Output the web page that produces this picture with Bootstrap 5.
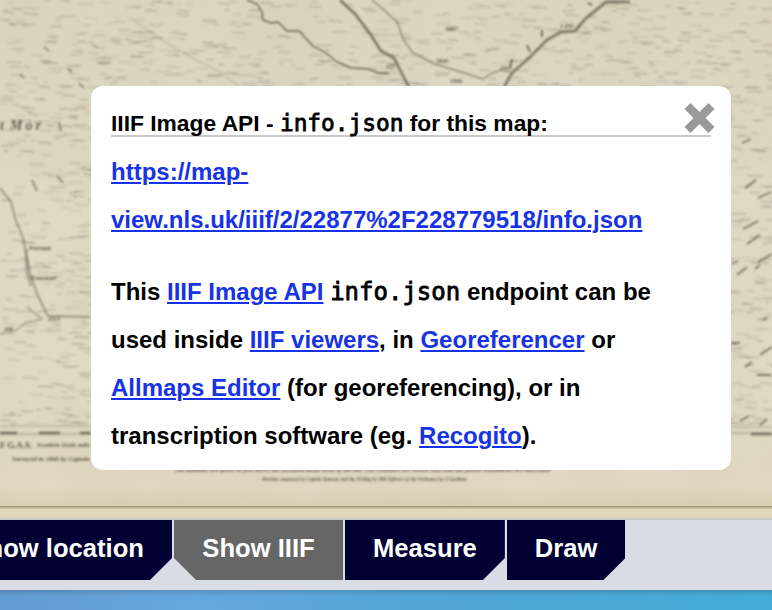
<!DOCTYPE html>
<html lang="en">
<head>
<meta charset="utf-8">
<meta name="viewport" content="width=device-width, initial-scale=1">
<title>Map viewer - IIIF</title>
<link href="https://cdn.jsdelivr.net/npm/bootstrap@5.3.0/dist/css/bootstrap.min.css" rel="stylesheet">
<style>
body{font-family:"Liberation Sans",Arial,sans-serif;font-weight:700;color:#000;background:#4a9fd2}
.viewer{height:610px}
.map-area{height:518px;background:#dbd4bf}
.map-art{display:block;width:772px;height:518px}
.iiif-panel{top:86px;left:91px;width:640px;height:384px;border-radius:12px;padding:12px 20px 0;font-size:24px;line-height:48px}
.panel-title{font-size:22.8px;line-height:51px;height:39px;border-bottom:2px solid #c8c8c8;white-space:nowrap}
.iiif-panel a{color:#1733e6;text-decoration:underline;text-decoration-thickness:2px;text-underline-offset:2px}
.json-name{font-family:"DejaVu Sans Mono",monospace;font-weight:400;-webkit-text-stroke:.8px #000}
.address{margin:11px 0 24px}
.panel-close{top:17px;right:16px;width:31px;height:30px;background:none;line-height:0}
.tool-bar{height:72px;background:#dadce6;border-top:2px solid #cacac8;gap:2px}
.tool{height:60px;padding:0 28px 4px;font-size:25.6px;line-height:56px;background:#000033;color:#fff;border:0;font-weight:700;white-space:nowrap;flex:none;clip-path:polygon(0 0,100% 0,100% 38px,calc(100% - 22px) 100%,0 100%)}
.tool.first{width:240px;margin-left:-68px}
.tool.current{width:169px;background:#666;clip-path:polygon(0 0,100% 0,100% 100%,22px 100%,0 38px)}
.water{height:20px;background:linear-gradient(#0002,transparent 6px),linear-gradient(90deg,#629bd2,#65a7dc 25%,#50a5d5 60%,#44abd9)}
</style>
<script src="https://cdn.jsdelivr.net/npm/bootstrap@5.3.0/dist/js/bootstrap.bundle.min.js"></script>
</head>
<body class="overflow-hidden">
<div class="viewer d-flex flex-column overflow-hidden">
<main class="map-area position-relative flex-shrink-0">
<svg class="map-art" viewBox="0 0 772 518" aria-hidden="true">
<defs>
<linearGradient id="paper" x2="0" y2="1"><stop offset="0" stop-color="#dcd5bf"/><stop offset=".45" stop-color="#dfd9c5"/><stop offset=".8" stop-color="#dfd8c4"/><stop offset=".94" stop-color="#e0d8c1"/><stop offset="1" stop-color="#d8caaa"/></linearGradient>
<filter id="soft" x="-5%" y="-5%" width="110%" height="110%"><feGaussianBlur stdDeviation=".8"/></filter>
<filter id="stain"><feTurbulence type="fractalNoise" baseFrequency=".012" numOctaves="3" seed="4"/><feColorMatrix values="0 0 0 0 .55 0 0 0 0 .48 0 0 0 0 .33 .5 0 0 0 -.16"/></filter>
</defs>
<rect width="772" height="518" fill="url(#paper)"/>
<rect width="772" height="518" filter="url(#stain)" opacity=".45"/>
<g filter="url(#soft)" fill="none" stroke="#5c574a">
<g id="moor" stroke-width="1.3"></g>
<path d="M247 0l10 4 5 8 1 8 8 3 7-1 9 9h12l14 15 13 7 11 9 14 6 18 1 9 4h10" opacity=".9" stroke-width="1.4"/>
<path d="M340 0l15 14 16 21 10 16 13 7 6 12 9 17" opacity=".75" stroke-width="2.6"/>
<path d="M372 0l12 10 14 13 5 16 10 14 22 11 23 7 25 8 7-5 10-4 10 2" opacity=".6" stroke-width="1.4"/>
<path d="M504 87l8-14 18-16 17-17 14-8 14-1 10-12 21-17h24" opacity=".7" stroke-width="2.9"/>
<path d="M135 22l35 23 28 16 22 11 20 15" opacity=".16" stroke-width="2"/>
<path d="M386 72q8-1 12 2" opacity=".35"/>
<path d="M0 188l11 14 4 16 8 20 3 15 4 20 7 21 11 22 42 1" opacity=".5" stroke-width="1.8"/>
<path d="M26 249l1 23 4 14" opacity=".4" stroke-width="2.6"/>
<path d="M27 307l15 12-17 4-10 8-15 3" opacity=".5" stroke-width="1.3"/>
<path d="M588 3l4 2M542 30v7M527 45l3 7M512 59l-2 8" stroke-width="1.8" opacity=".9"/>
<path d="M32 180l5 11M57 176l6 7M59 122l2 9M44 47l5 4M68 69l4 3M20 74l4 4M79 83l5 5" opacity=".7" stroke-width="1.6"/>
<path d="M742 143l9-4M745 188l11-8M758 198l13-6M743 229l15-8M747 244l13-9M732 264l6-3M737 275l10-8M758 262l14-8M755 269l5-4M760 355l12-8M745 367l7-5M757 375h14M740 421l9-5M760 425l7-6M731 343h9M762 320l5-2" opacity=".75" stroke-width="1.8"/>
<path d="M0 426h91M731 427h41" opacity=".4"/><path d="M0 434h91M731 433h41" opacity=".5" stroke-width="1.2"/>
<path d="M0 433h17M39 433h21M80 433h11M751 434h21" opacity=".8" stroke-width="2.4"/>
</g>
<g filter="url(#soft)" fill="#4c483e" font-family="Liberation Serif,serif" font-style="italic" font-weight="700">
<text x="0" y="130" font-size="14" opacity=".8">t</text><text x="10" y="130" font-size="14" textLength="31" opacity=".8">Mòr</text>
<g font-size="6" opacity=".9"><text x="29" y="250">Powrack</text><text x="31" y="280">Fowrmart</text><text x="48" y="321">2515</text><text x="4" y="331">Allt</text><text x="560" y="28">1 251</text><text x="446" y="31">1807</text><text x="436" y="63">1826</text><text x="450" y="83">1906</text><text x="500" y="70">1843</text><text x="386" y="68">225</text></g>
<g opacity=".9"><text x="0" y="448" font-size="9" textLength="32" lengthAdjust="spacingAndGlyphs" font-style="normal">F G.A.S.</text><text x="37" y="447" font-size="7" textLength="53" lengthAdjust="spacingAndGlyphs">Scottish Sixth mile</text>
<text x="12" y="461" font-size="6.5" textLength="78" lengthAdjust="spacingAndGlyphs">Surveyed in 1868 by Captain</text></g>
<g opacity=".8"><text x="174" y="472" font-size="5.5" textLength="376" lengthAdjust="spacingAndGlyphs">The altitudes are given in feet above the assumed mean level of the sea. The contours are shown thus and the parish boundaries are described</text><text x="262" y="481" font-size="5.5" textLength="205" lengthAdjust="spacingAndGlyphs">Parishes engraved by Captain Ramsay and the Writing by Hill Officers of the Ordnance by J Gardiner</text></g>
</g>
<rect y="506" width="772" height="1.6" fill="#a59678"/><rect y="507.6" width="772" height="1.5" fill="#cbbd9f"/><rect y="509" width="772" height="9" fill="#e0d7bd"/>
</svg>
<section class="iiif-panel position-absolute bg-white" aria-label="IIIF information">
<button class="panel-close position-absolute border-0 p-0" aria-label="Close"><svg width="31" height="30" viewBox="0 0 31 30"><path d="M3.5 3L27.5 27M27.5 3L3.5 27" stroke="#999" stroke-width="8.5"/></svg></button>
<div class="panel-title">IIIF Image API - <span class="json-name">info.json</span> for this map:</div>
<p class="address"><a href="#">https://map-<br>view.nls.uk/iiif/2/22877%2F228779518/info.json</a></p>
<p class="mb-0">This <a href="#">IIIF Image API</a> <span class="json-name">info.json</span> endpoint can be<br>used inside <a href="#">IIIF viewers</a>, in <a href="#">Georeferencer</a> or<br><a href="#">Allmaps Editor</a> (for georeferencing), or in<br>transcription software (eg. <a href="#">Recogito</a>).</p>
</section>
</main>
<nav class="tool-bar d-flex align-items-start flex-shrink-0">
<button class="tool first text-end">Show location</button>
<button class="tool current">Show IIIF</button>
<button class="tool">Measure</button>
<button class="tool">Draw</button>
</nav>
<div class="water flex-shrink-0"></div>
</div>
<script>
// Scatter the short moorland hatching over the sheet with a repeatable sequence.
let seed=17;
const rnd=()=>(seed=(seed*16807)%2147483647)/2147483647;
let marks='';
for(let i=0;i<2500;i++){
  const x=rnd()*772,y=rnd()*424,w=4+rnd()*11,o=.1+rnd()*.25;
  marks+=`<path d="M${x.toFixed(1)} ${y.toFixed(1)}q${(w/2).toFixed(1)} ${(rnd()*1.5-.7).toFixed(1)} ${w.toFixed(1)} ${(rnd()*2-.6).toFixed(1)}" opacity="${o.toFixed(2)}"/>`;
}
document.getElementById('moor').innerHTML=marks;
</script>
</body>
</html>
